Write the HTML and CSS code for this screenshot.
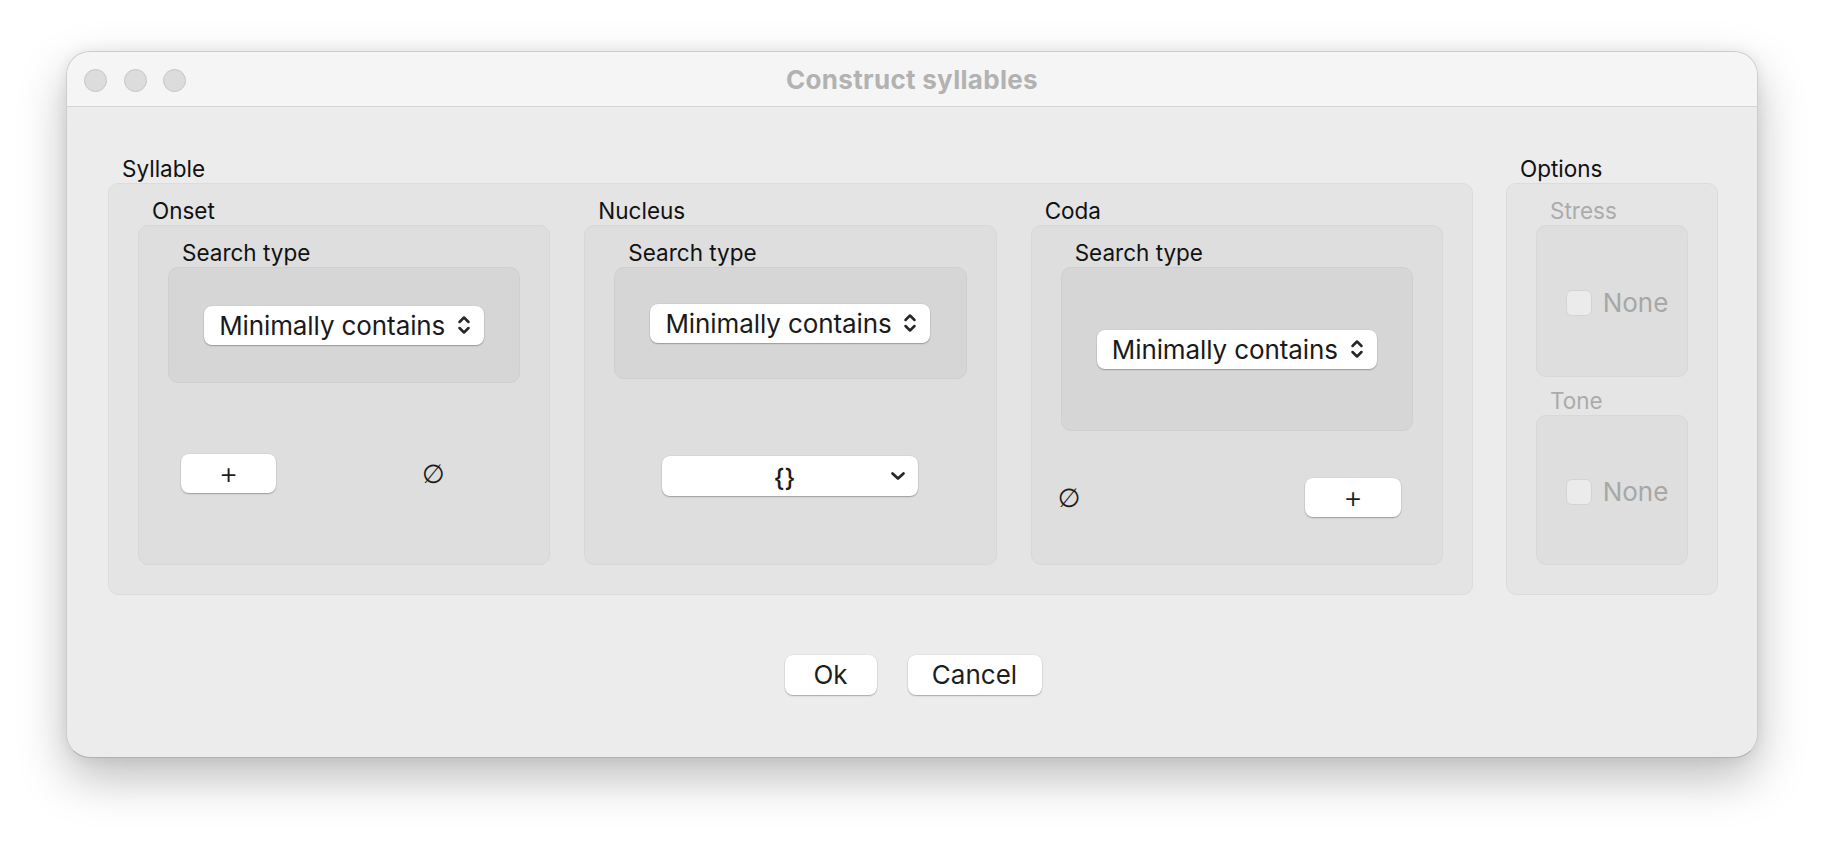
FILE: index.html
```html
<!DOCTYPE html>
<html lang="en">
<head>
<meta charset="utf-8">
<title>Construct syllables</title>
<link rel="stylesheet" href="styles.css">
</head>
<body>
<div class="window">
  <header class="titlebar">
    <div class="lights">
      <span class="light"></span>
      <span class="light"></span>
      <span class="light"></span>
    </div>
    <div class="title">Construct syllables</div>
    <div class="spacer"></div>
  </header>

  <main class="content">
    <div class="groups">
      <section class="group syllable">
        <div class="label">Syllable</div>
        <div class="box syl-box">

          <section class="part">
            <div class="label">Onset</div>
            <div class="box part-box">
              <div class="label">Search type</div>
              <div class="box search-box search-onset">
                <div class="select">
                  <span class="select-text">Minimally contains</span>
                  <svg class="updown" viewBox="0 0 14 22" width="14" height="22"><path d="M2.5 8 L7 3.5 L11.5 8 M2.5 14 L7 18.5 L11.5 14"/></svg>
                </div>
              </div>
              <div class="part-row onset-row">
                <button class="btn plus-btn">+</button>
                <span class="empty">∅</span>
              </div>
            </div>
          </section>

          <section class="part">
            <div class="label">Nucleus</div>
            <div class="box part-box">
              <div class="label">Search type</div>
              <div class="box search-box search-nucleus">
                <div class="select">
                  <span class="select-text">Minimally contains</span>
                  <svg class="updown" viewBox="0 0 14 22" width="14" height="22"><path d="M2.5 8 L7 3.5 L11.5 8 M2.5 14 L7 18.5 L11.5 14"/></svg>
                </div>
              </div>
              <div class="part-row nucleus-row">
                <div class="combo">
                  <span class="combo-text">{}</span>
                  <svg class="down" viewBox="0 0 16 10" width="16" height="10"><path d="M2.5 2.5 L8 7.5 L13.5 2.5"/></svg>
                </div>
              </div>
            </div>
          </section>

          <section class="part">
            <div class="label">Coda</div>
            <div class="box part-box">
              <div class="label">Search type</div>
              <div class="box search-box search-coda">
                <div class="select">
                  <span class="select-text">Minimally contains</span>
                  <svg class="updown" viewBox="0 0 14 22" width="14" height="22"><path d="M2.5 8 L7 3.5 L11.5 8 M2.5 14 L7 18.5 L11.5 14"/></svg>
                </div>
              </div>
              <div class="part-row coda-row">
                <span class="empty">∅</span>
                <button class="btn plus-btn coda-plus">+</button>
              </div>
            </div>
          </section>

        </div>
      </section>

      <section class="group options">
        <div class="label">Options</div>
        <div class="box opt-box">
          <div class="label dim">Stress</div>
          <div class="box opt-inner stress-box">
            <label class="check"><span class="checkbox"></span><span class="check-text">None</span></label>
          </div>
          <div class="label dim tone-label">Tone</div>
          <div class="box opt-inner tone-box">
            <label class="check"><span class="checkbox"></span><span class="check-text">None</span></label>
          </div>
        </div>
      </section>
    </div>

    <div class="actions">
      <button class="btn action ok">Ok</button>
      <button class="btn action cancel">Cancel</button>
    </div>
  </main>
</div>
</body>
</html>
```

FILE: styles.css
```css
* { box-sizing: border-box; }

html, body {
  margin: 0;
  padding: 0;
}

body {
  width: 1826px;
  height: 842px;
  overflow: hidden;
  background: #ffffff;
  font-family: Inter, "Noto Sans", "DejaVu Sans", sans-serif;
  color: #1c1c1c;
}

.window {
  margin: 51px 0 0 66px;
  width: 1692px;
  height: 707px;
  border: 1px solid #cdcdcd;
  border-bottom-color: #b0b0b0;
  border-radius: 24px;
  background: #ececec;
  box-shadow: 0 20px 48px rgba(0, 0, 0, 0.26), 0 0 14px rgba(0, 0, 0, 0.07);
  overflow: hidden;
}

/* title bar */
.titlebar {
  height: 55px;
  background: #f5f5f5;
  border-bottom: 1px solid #d4d4d4;
  display: grid;
  grid-template-columns: 1fr auto 1fr;
  align-items: center;
}

.lights {
  display: flex;
  gap: 16.5px;
  padding-left: 17px;
  padding-top: 2px;
}

.light {
  width: 23px;
  height: 23px;
  border-radius: 50%;
  background: #dcdcdc;
  border: 1px solid #c5c5c5;
}

.title {
  font-family: Inter, "Liberation Sans", sans-serif;
  font-weight: 700;
  font-size: 26px;
  color: #b2b2b2;
  letter-spacing: 0.3px;
}

/* content */
.content {
  padding: 48px 39px 0 41px;
}

.groups {
  display: flex;
  gap: 33px;
}

.label {
  font-size: 22.5px;
  line-height: 28px;
  height: 28px;
  padding-left: 14px;
  white-space: nowrap;
  color: #111111;
}

.label.dim {
  color: #ababab;
}

.box {
  border-radius: 10px;
}

.syllable {
  width: 1365px;
}

.syl-box {
  height: 412px;
  background: #e4e4e4;
  border: 1px solid #dcdcdc;
  padding: 13px 29px 0 29px;
  display: flex;
  gap: 34px;
}

.part {
  flex: 1;
  display: flex;
  flex-direction: column;
}

.part-box {
  height: 340px;
  background: #dedede;
  border: 1px solid #d7d7d7;
  padding: 13px 29px 0 29px;
  display: flex;
  flex-direction: column;
}

.search-box {
  flex-shrink: 0;
  background: #d6d6d6;
  border: 1px solid #cfcfcf;
  display: flex;
  align-items: center;
  justify-content: center;
}

.search-onset { height: 116px; }
.search-nucleus { height: 112px; }
.search-coda { height: 164px; }

.select {
  width: 280px;
  height: 39px;
  background: #ffffff;
  border-radius: 8px;
  box-shadow: 0 1px 1.5px rgba(0, 0, 0, 0.28), 0 0 0 0.5px rgba(0, 0, 0, 0.06);
  display: flex;
  align-items: center;
  justify-content: space-between;
  padding: 0 13px 0 15px;
}

.select-text {
  font-size: 26px;
  line-height: 39px;
  color: #1a1a1a;
  white-space: nowrap;
  letter-spacing: -0.1px;
}

.updown path,
.down path {
  fill: none;
  stroke: #262626;
  stroke-width: 2.5;
  stroke-linecap: round;
  stroke-linejoin: round;
}

.down path {
  stroke-width: 2.7;
}

.part-row {
  flex: 1;
  display: flex;
  align-items: center;
}

.btn {
  font-family: Inter, "Noto Sans", sans-serif;
  background: #ffffff;
  border: none;
  border-radius: 8px;
  box-shadow: 0 1px 1.5px rgba(0, 0, 0, 0.28), 0 0 0 0.5px rgba(0, 0, 0, 0.06);
  color: #1e1e1e;
  font-size: 26px;
  padding: 0;
  height: 39px;
  display: flex;
  align-items: center;
  justify-content: center;
}

.plus-btn {
  width: 95px;
  font-size: 30px;
  font-weight: 300;
  padding-bottom: 2px;
}

.onset-row .plus-btn {
  margin-left: 13px;
}

.empty {
  font-family: "DejaVu Sans", Inter, sans-serif;
  font-size: 26px;
  line-height: 28px;
  color: #1a1a1a;
}

.onset-row .empty {
  margin-left: 146px;
}

.coda-row {
  justify-content: space-between;
}

.coda-row .empty {
  margin-left: -3px;
}

.coda-plus {
  width: 96px;
  margin-right: 12px;
}

.nucleus-row {
  justify-content: center;
  padding-top: 8px;
}

.combo {
  width: 256px;
  height: 40px;
  background: #ffffff;
  border-radius: 8px;
  box-shadow: 0 1px 1.5px rgba(0, 0, 0, 0.28), 0 0 0 0.5px rgba(0, 0, 0, 0.06);
  display: flex;
  align-items: center;
  padding: 0 12px 0 0;
}

.combo-text {
  flex: 1;
  text-align: center;
  font-size: 25px;
  font-weight: 500;
  line-height: 40px;
  padding-left: 16px;
  padding-top: 4px;
}

/* options */
.options {
  width: 212px;
}

.opt-box {
  height: 412px;
  background: #e5e5e5;
  border: 1px solid #dcdcdc;
  padding: 13px 29px 0 29px;
  display: flex;
  flex-direction: column;
}

.opt-inner {
  background: #dedede;
  border: 1px solid #d8d8d8;
  display: flex;
  align-items: center;
  justify-content: center;
}

.stress-box { height: 152px; }
.tone-label { margin-top: 10px; }
.tone-box { height: 150px; }

.check {
  display: flex;
  align-items: center;
  gap: 11px;
  padding-left: 10px;
  padding-top: 3px;
}

.checkbox {
  width: 26px;
  height: 26px;
  border-radius: 6px;
  background: #ebebeb;
  border: 1px solid #d3d3d3;
}

.check-text {
  font-size: 26px;
  color: #a7a7a7;
}

/* bottom actions */
.actions {
  display: flex;
  justify-content: center;
  gap: 31px;
  margin-top: 60px;
}

.action {
  height: 39.5px;
}

.ok { width: 92px; }
.cancel { width: 134px; }
```
